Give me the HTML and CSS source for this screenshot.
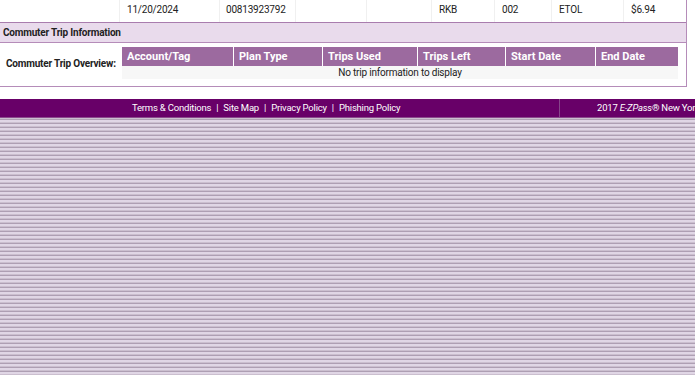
FILE: index.html
```
<html>

<head>
    <meta http-equiv="Content-Type" content="text/html; charset=UTF-8">
    <link rel="stylesheet" href="styles.css">
</head>

<body>
    <div class="page">
        <div class="panel">
            <div class="tollRow">
                <div class="cell c1"></div>
                <div class="cell c2">11/20/2024</div>
                <div class="cell c3">00813923792</div>
                <div class="cell c4"></div>
                <div class="cell c5"></div>
                <div class="cell c6">RKB</div>
                <div class="cell c7">002</div>
                <div class="cell c8">ETOL</div>
                <div class="cell c9">$6.94</div>
            </div>
            <div class="sectionTitle">Commuter Trip Information</div>
            <div class="overview">
                <div class="overviewLabel">Commuter Trip Overview:</div>
                <table class="tripTable">
                    <thead>
                        <tr>
                            <th class="w1">Account/Tag</th>
                            <th class="w2">Plan Type</th>
                            <th class="w3">Trips Used</th>
                            <th class="w4">Trips Left</th>
                            <th class="w5">Start Date</th>
                            <th class="w6">End Date</th>
                        </tr>
                    </thead>
                    <tbody>
                        <tr>
                            <td colspan="6">No trip information to display</td>
                        </tr>
                    </tbody>
                </table>
            </div>
        </div>
    </div>

    <div class="footer">
        <div class="footerLinks">
            <a href="#">Terms &amp; Conditions</a><span class="sep">|</span><a href="#">Site Map</a><span class="sep">|</span><a href="#">Privacy Policy</a><span class="sep">|</span><a href="#">Phishing Policy</a>
        </div>
        <div class="footerCopy">2017 <i>E-ZPass</i>® New York</div>
    </div>
</body>

</html>
```
FILE: styles.css
```
html {
    overflow: hidden;
}

body {
    margin: 0;
    font-family: Roboto, "Liberation Sans", sans-serif;
    font-size: 10px;
    letter-spacing: -0.2px;
    color: #222;
    background: repeating-linear-gradient(to bottom,
            #e0d6e5 0, #e0d6e5 2px,
            #cbbfcf 2px, #cbbfcf 3px,
            #ae9fb3 3px, #ae9fb3 4px);
    min-height: 375px;
}

.page {
    background: white;
    padding-bottom: 12px;
}

.panel {
    width: 686px;
    border-right: 1px solid #b58cb9;
    border-bottom: 1px solid #b58cb9;
}

.tollRow {
    display: flex;
    height: 22px;
    border-bottom: 1px solid #a97dae;
}

.tollRow .cell {
    box-sizing: border-box;
    padding: 4px 0 0 7px;
    border-right: 1px solid #f0f0f0;
    white-space: nowrap;
}

.c1 { width: 120px; }
.c2 { width: 100px; }
.c3 { width: 76px; padding-left: 6px !important; }
.c4 { width: 71px; }
.c5 { width: 65px; }
.c6 { width: 63px; }
.c7 { width: 57px; }
.c8 { width: 72px; }
.c9 { width: 62px; border-right: none !important; }

.sectionTitle {
    background: #e9dbec;
    height: 19px;
    line-height: 19px;
    padding-left: 3px;
    font-weight: bold;
    border-bottom: 1px solid #b58cb9;
}

.overview {
    display: flex;
    align-items: center;
    padding: 4px 0 7px 0;
}

.overviewLabel {
    width: 122px;
    flex-shrink: 0;
    box-sizing: border-box;
    padding-left: 6px;
    font-weight: bold;
    white-space: nowrap;
    padding-top: 1px;
}

.tripTable {
    border-collapse: collapse;
    width: 556px;
    table-layout: fixed;
    font-size: 10px;
    letter-spacing: -0.2px;
}

.tripTable th {
    background: #9c6a9f;
    color: white;
    font-size: 11px;
    letter-spacing: 0;
    font-weight: bold;
    text-align: left;
    height: 19px;
    padding: 0 0 0 5px;
    border-left: 1px solid white;
}

.tripTable th:first-child {
    border-left: none;
}

.w1 { width: 106px; }
.w2 { width: 83px; }
.w3 { width: 89px; }
.w4 { width: 82px; }
.w5 { width: 84px; }

.tripTable td {
    background: #f7f7f7;
    color: #222;
    text-align: center;
    height: 13px;
    padding: 0;
    line-height: 13px;
}

.footer {
    display: flex;
    background: #680068;
    height: 18px;
    line-height: 18px;
    color: white;
    font-size: 9.5px;
    white-space: nowrap;
    border-bottom: 1px solid #8a4a8c;
}

.footerLinks {
    width: 560px;
    flex-shrink: 0;
    box-sizing: border-box;
    padding-left: 132px;
    border-right: 1px solid #86468a;
}

.footerLinks a {
    color: white;
    text-decoration: none;
}

.sep {
    margin: 0 5px;
}

.footerCopy {
    padding-left: 37px;
}
```
